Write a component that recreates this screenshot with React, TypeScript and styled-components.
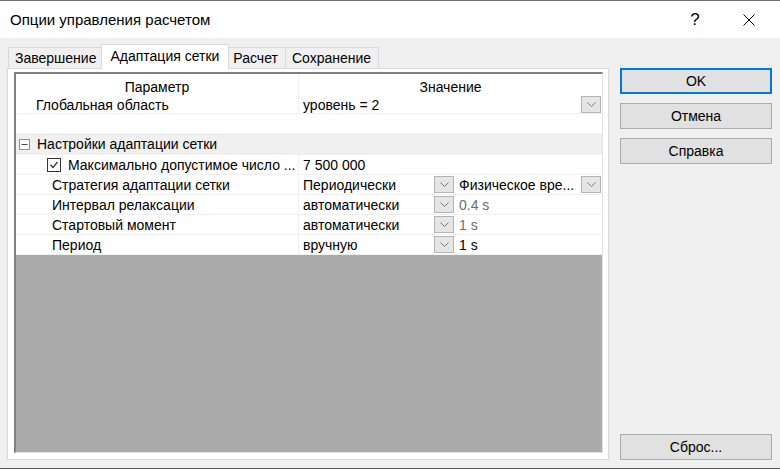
import React from 'react';
import styled, { createGlobalStyle, css } from 'styled-components';

const GlobalStyle = createGlobalStyle`
  html, body {
    margin: 0;
    padding: 0;
    background: #f0f0f0;
  }
  * {
    box-sizing: border-box;
  }
`;

const Window = styled.div`
  width: 780px;
  height: 469px;
  display: flex;
  flex-direction: column;
  background: #f0f0f0;
  border-top: 1px solid #6e6e6e;
  border-bottom: 1px solid #5a5a5a;
  font-family: 'Liberation Sans', Arial, sans-serif;
  font-size: 14px;
  color: #000;
`;

const TitleBar = styled.div`
  height: 37px;
  flex: none;
  display: flex;
  align-items: center;
  background: #fff;
  padding-left: 10px;
`;

const Title = styled.div`
  flex: 1;
  font-size: 15px;
`;

const HelpGlyph = styled.div`
  width: 58px;
  text-align: center;
  font-size: 17px;
  margin-right: 2px;
`;

const CloseButton = styled.div`
  width: 46px;
  height: 37px;
  display: flex;
  align-items: center;
  justify-content: center;
  margin-right: 8px;
`;

const Body = styled.div`
  flex: 1;
  display: grid;
  grid-template-columns: 602px 152px;
  grid-template-rows: 24px 1fr;
  column-gap: 11px;
  padding: 6px 8px 8px 7px;
`;

const TabStrip = styled.div`
  display: flex;
  align-items: flex-end;
  padding-left: 2px;
  grid-column: 1;
  grid-row: 1;
`;

const Tab = styled.div<{ $active?: boolean }>`
  height: 21px;
  display: flex;
  align-items: center;
  padding: 0 7px 0 6px;
  border: 1px solid #d9d9d9;
  border-bottom: none;
  margin-left: -1px;
  background: #f0f0f0;
  white-space: nowrap;
  ${({ $active }) =>
    $active &&
    css`
      position: relative;
      z-index: 1;
      height: 25px;
      margin: 0 -2px -1px -3px;
      padding: 0 9px 3px 8px;
      background: #fff;
    `}
`;

const Panel = styled.div`
  grid-column: 1;
  grid-row: 2;
  background: #fff;
  border: 1px solid #d9d9d9;
  padding: 3px 5px 6px 6px;
  display: flex;
`;

const Grid = styled.div`
  flex: 1;
  display: flex;
  flex-direction: column;
  border-style: solid;
  border-width: 2px 1px 1px 2px;
  border-color: #808080 #e3e3e3 #e3e3e3 #808080;
`;

const HeaderRow = styled.div`
  height: 22px;
  display: flex;
  background: #fff;
`;

const HeaderCell = styled.div<{ $width?: number }>`
  ${({ $width }) => ($width ? `width: ${$width}px;` : 'flex: 1;')}
  display: flex;
  align-items: center;
  justify-content: center;
  padding-top: 3px;
  border-right: 1px solid #f0f0f0;
  &:last-child {
    border-right: none;
  }
`;

const Row = styled.div<{ $height?: number; $group?: boolean }>`
  height: ${({ $height }) => $height ?? 20}px;
  display: flex;
  border-bottom: 1px solid #f0f0f0;
  background: ${({ $group }) => ($group ? '#f0f0f0' : '#fff')};
`;

const NameCell = styled.div<{ $indent: number; $full?: boolean }>`
  ${({ $full }) => ($full ? 'flex: 1;' : 'width: 283px; border-right: 1px solid #f0f0f0;')}
  display: flex;
  align-items: center;
  gap: 7px;
  padding-left: ${({ $indent }) => $indent}px;
  white-space: nowrap;
  overflow: hidden;
`;

const ValueCell = styled.div`
  flex: 1;
  display: flex;
  align-items: center;
  min-width: 0;
`;

const Combo = styled.div<{ $width?: number }>`
  ${({ $width }) => ($width ? `width: ${$width}px;` : 'flex: 1;')}
  height: 100%;
  display: flex;
  align-items: center;
  padding: 1px 0;
  min-width: 0;
`;

const ComboText = styled.span<{ $disabled?: boolean }>`
  flex: 1;
  padding-left: 4px;
  white-space: nowrap;
  overflow: hidden;
  color: ${({ $disabled }) => ($disabled ? '#6d6d6d' : '#000')};
`;

const DropButton = styled.div`
  width: 20px;
  height: 17px;
  flex: none;
  display: flex;
  align-items: center;
  justify-content: center;
  background: #e5e5e5;
  border: 1px solid #b4b4b4;
  margin-right: 1px;
`;

const Filler = styled.div`
  flex: 1;
  background: #ababab;
`;

const ButtonColumn = styled.div`
  grid-column: 2;
  grid-row: 2;
  display: flex;
  flex-direction: column;
  gap: 9px;
`;

const Button = styled.div<{ $primary?: boolean }>`
  height: 26px;
  display: flex;
  align-items: center;
  justify-content: center;
  background: #e1e1e1;
  border: ${({ $primary }) => ($primary ? '2px solid #0078d7' : '1px solid #adadad')};
`;

const Spacer = styled.div`
  flex: 1;
`;

function Chevron() {
  return (
    <svg width='9' height='5' viewBox='0 0 9 5'>
      <path d='M0.5 0.5 L4.5 4.5 L8.5 0.5' fill='none' stroke='#7a7a7a' strokeWidth='1' />
    </svg>
  );
}

function CollapseBox() {
  return (
    <svg width='11' height='11' viewBox='0 0 11 11' style={{ flex: 'none' }}>
      <rect x='0.5' y='0.5' width='10' height='10' fill='#fff' stroke='#8e8f8f' />
      <path d='M2.5 5.5 H8.5' stroke='#3c4a64' strokeWidth='1' />
    </svg>
  );
}

function CheckBox() {
  return (
    <svg width='14' height='14' viewBox='0 0 14 14' style={{ flex: 'none' }}>
      <rect x='0.5' y='0.5' width='13' height='13' fill='#fff' stroke='#333' />
      <path d='M3.5 7 L6 9.5 L10.5 4' fill='none' stroke='#333' strokeWidth='1.2' />
    </svg>
  );
}

function CloseIcon() {
  return (
    <svg width='12' height='12' viewBox='0 0 12 12'>
      <path d='M0.5 0.5 L11.5 11.5 M11.5 0.5 L0.5 11.5' stroke='#000' strokeWidth='1' />
    </svg>
  );
}

type TCombo = { text: string; disabled?: boolean; width?: number; drop?: boolean };

function ComboCell({ text, disabled, width, drop = true }: TCombo) {
  return (
    <Combo $width={width}>
      <ComboText $disabled={disabled}>{text}</ComboText>
      {drop && (
        <DropButton>
          <Chevron />
        </DropButton>
      )}
    </Combo>
  );
}

const settings: { name: string; value: TCombo; extra?: TCombo }[] = [
  {
    name: 'Стратегия адаптации сетки',
    value: { text: 'Периодически', width: 156 },
    extra: { text: 'Физическое вре...' },
  },
  {
    name: 'Интервал релаксации',
    value: { text: 'автоматически', width: 156 },
    extra: { text: '0.4 s', disabled: true, drop: false },
  },
  {
    name: 'Стартовый момент',
    value: { text: 'автоматически', width: 156 },
    extra: { text: '1 s', disabled: true, drop: false },
  },
  {
    name: 'Период',
    value: { text: 'вручную', width: 156 },
    extra: { text: '1 s', drop: false },
  },
];

export default function App() {
  return (
    <Window>
      <GlobalStyle />
      <TitleBar>
        <Title>Опции управления расчетом</Title>
        <HelpGlyph>?</HelpGlyph>
        <CloseButton>
          <CloseIcon />
        </CloseButton>
      </TitleBar>
      <Body>
        <TabStrip>
          <Tab>Завершение</Tab>
          <Tab $active>Адаптация сетки</Tab>
          <Tab>Расчет</Tab>
          <Tab>Сохранение</Tab>
        </TabStrip>
        <Panel>
          <Grid>
            <HeaderRow>
              <HeaderCell $width={283}>Параметр</HeaderCell>
              <HeaderCell>Значение</HeaderCell>
            </HeaderRow>
            <Row $height={18}>
              <NameCell $indent={20}>Глобальная область</NameCell>
              <ValueCell>
                <ComboCell text='уровень = 2' />
              </ValueCell>
            </Row>
            <Row />
            <Row $group $height={21}>
              <NameCell $indent={3} $full>
                <CollapseBox />
                Настройки адаптации сетки
              </NameCell>
            </Row>
            <Row>
              <NameCell $indent={31}>
                <CheckBox />
                Максимально допустимое число ...
              </NameCell>
              <ValueCell>
                <ComboCell text='7 500 000' drop={false} />
              </ValueCell>
            </Row>
            {settings.map(({ name, value, extra }) => (
              <Row key={name}>
                <NameCell $indent={36}>{name}</NameCell>
                <ValueCell>
                  <ComboCell {...value} />
                  {extra && <ComboCell {...extra} />}
                </ValueCell>
              </Row>
            ))}
            <Filler />
          </Grid>
        </Panel>
        <ButtonColumn>
          <Button $primary>OK</Button>
          <Button>Отмена</Button>
          <Button>Справка</Button>
          <Spacer />
          <Button>Сброс...</Button>
        </ButtonColumn>
      </Body>
    </Window>
  );
}
